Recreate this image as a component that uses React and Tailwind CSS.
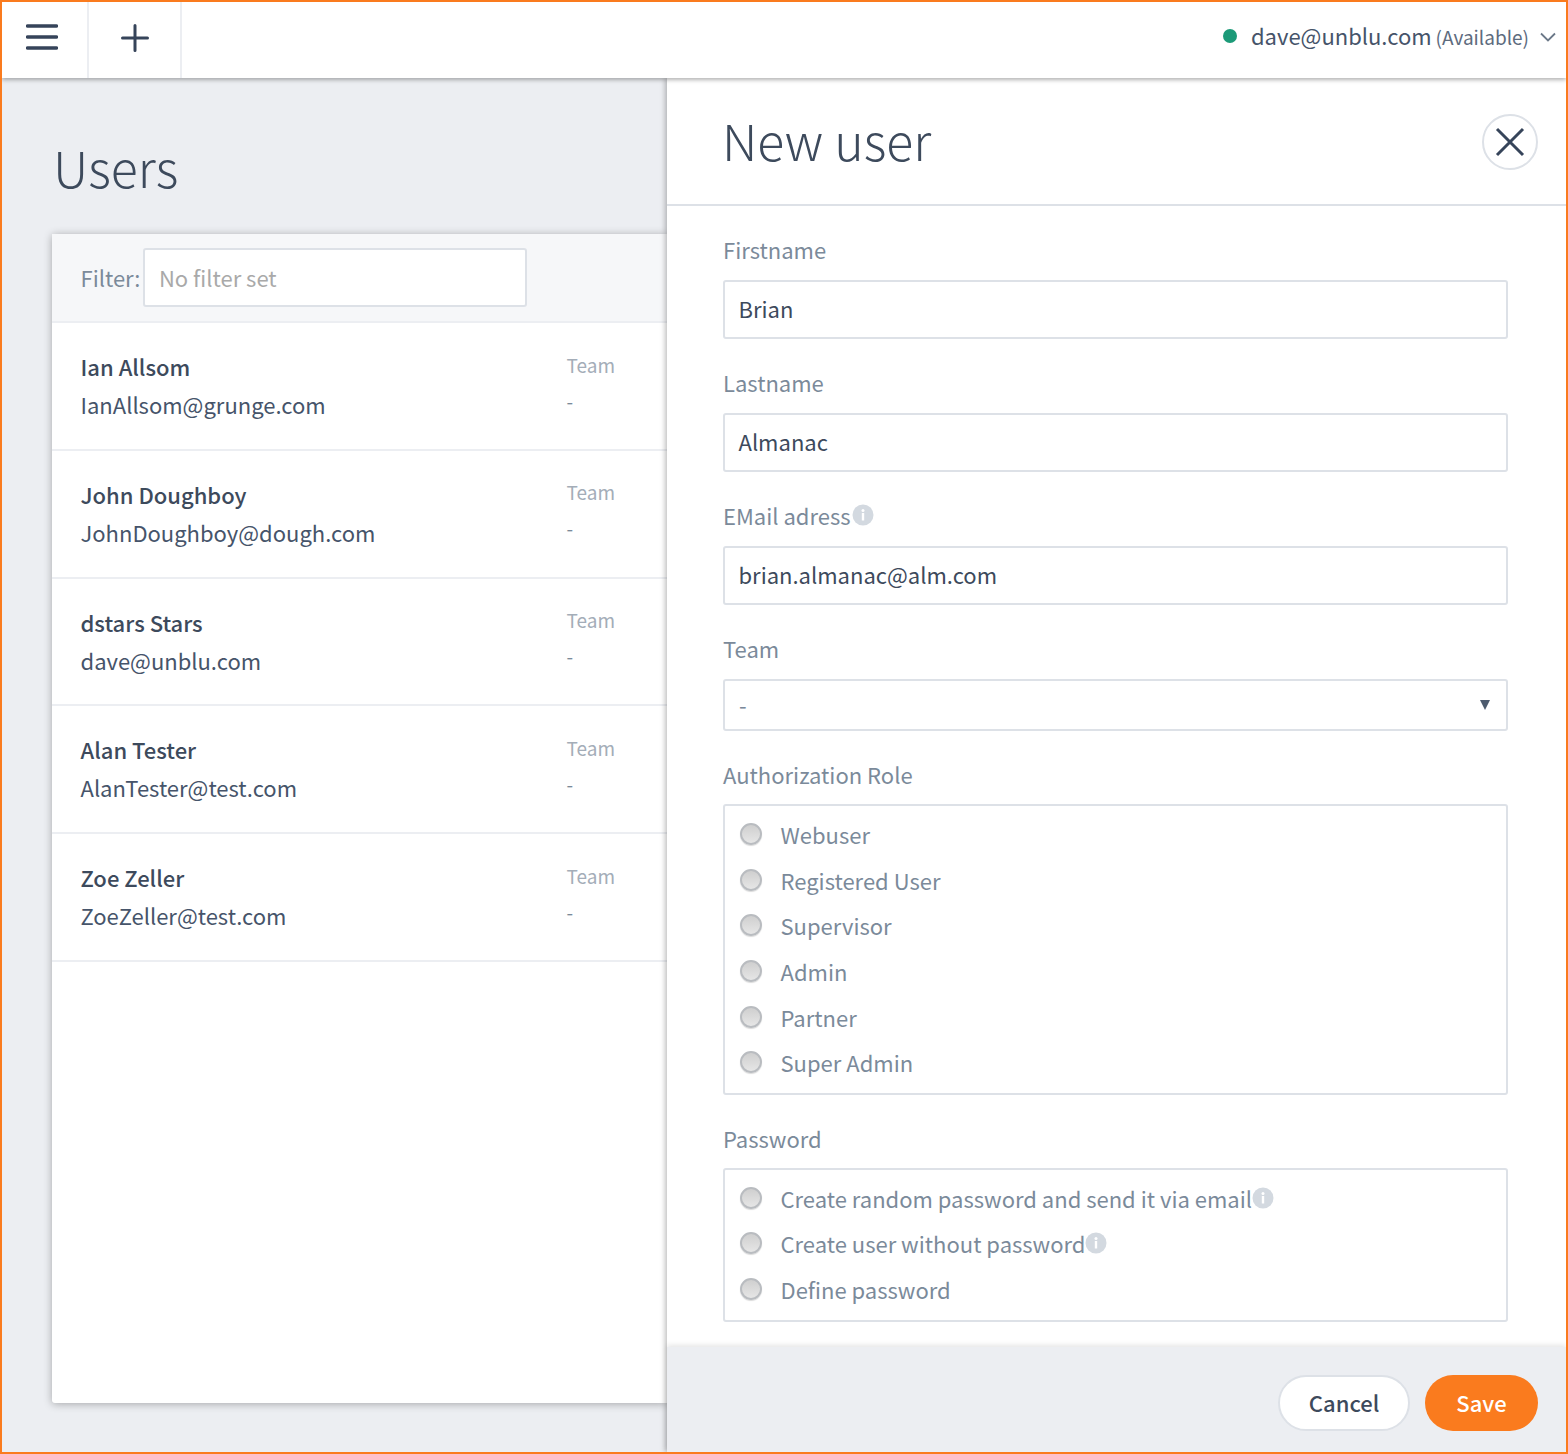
import React from "react";

const users = [
  ["Ian Allsom", "IanAllsom@grunge.com"],
  ["John Doughboy", "JohnDoughboy@dough.com"],
  ["dstars Stars", "dave@unblu.com"],
  ["Alan Tester", "AlanTester@test.com"],
  ["Zoe Zeller", "ZoeZeller@test.com"],
];
const font = { fontFamily: '"Noto Sans CJK SC", "Noto Sans", sans-serif' };

function Info({ className = "" }) {
  return (
    <svg width="22" height="22" viewBox="0 0 22 22" className={"shrink-0 " + className}>
      <circle cx="11" cy="11" r="10.5" fill="#D3D9E0" />
      <circle cx="11" cy="6.5" r="1.5" fill="#fff" />
      <rect x="9.8" y="9" width="2.4" height="7.5" fill="#fff" />
    </svg>
  );
}

function Label({ children, info }) {
  return (
    <div className="flex h-[30px] items-center pb-[4px] text-[22px] leading-[26px] text-[#7B8A9A]">
      {children}
      {info && <Info className="ml-[1px]" />}
    </div>
  );
}

function Field({ label, value, info }) {
  return (
    <div className="mb-[30px]">
      <Label info={info}>{label}</Label>
      <div className="mt-[14px] flex h-[59px] items-center rounded-[3px] border-2 border-[#DDE1E7] bg-white px-[13.5px] pb-[2px] text-[22px] text-[#3D4A5C]">
        {value}
      </div>
    </div>
  );
}

function Radio({ label, info }) {
  return (
    <div className="flex h-[45.6px] items-center text-[22px] text-[#7B8A9A]">
      <span className="-mt-[3px] h-[22px] w-[22px] shrink-0 rounded-full border-2 border-[#B9BCC0] bg-gradient-to-b from-[#CFCFCF] to-[#E6E6E6] shadow-[0_1px_1px_rgba(0,0,0,0.15)]" />
      <span className="ml-[18.5px] pb-[2px]">{label}</span>
      {info && <Info className="-mt-[3px]" />}
    </div>
  );
}

function Group({ label, items, className = "", pb }) {
  return (
    <div className={className}>
      <Label>{label}</Label>
      <div className={"mt-[13px] rounded-[3px] border-2 border-[#DDE1E7] bg-white px-[15px] pt-[7px] " + pb}>
        {items.map(([t, i]) => (
          <Radio key={t} label={t} info={i} />
        ))}
      </div>
    </div>
  );
}

export default function App() {
  return (
    <div style={font} className="flex h-[1454px] w-[1568px] flex-col overflow-hidden border-2 border-[#FA7B1E] bg-[#ECEEF2]">
      <header className="relative z-20 flex h-[76px] shrink-0 items-center bg-white shadow-[0_2px_4px_rgba(0,0,0,0.3)]">
        <div className="flex h-full w-[87px] items-center justify-center border-r-2 border-[#ECEEF2] pb-[6px]">
          <svg width="32" height="28" viewBox="0 0 32 28" className="mr-[5px]">
            <path d="M1.5 3h29M1.5 14h29M1.5 25h29" stroke="#36445A" strokeWidth="3.4" strokeLinecap="round" />
          </svg>
        </div>
        <div className="flex h-full w-[93px] items-center justify-center border-r-2 border-[#ECEEF2] pb-[4px]">
          <svg width="28" height="28" viewBox="0 0 28 28">
            <path d="M14 1.5v25M1.5 14h25" stroke="#36445A" strokeWidth="3" strokeLinecap="round" />
          </svg>
        </div>
        <div className="ml-auto flex items-center pb-[6px] pr-[10px]">
          <span className="mb-[2px] h-[14px] w-[14px] rounded-full bg-[#1C9A78]" />
          <span className="ml-[14px] pb-[4px] text-[22px] text-[#46546A]">dave@unblu.com</span>
          <span className="ml-[4px] text-[19px] text-[#5D6B7E]">(Available)</span>
          <svg width="16" height="10" viewBox="0 0 16 10" className="ml-[11px]">
            <path d="M1 1.5l7 7 7-7" fill="none" stroke="#6B7888" strokeWidth="1.8" />
          </svg>
        </div>
      </header>

      <div className="flex min-h-0 flex-1">
        <main className="flex w-[665px] shrink-0 flex-col pb-[49px] pl-[50px]">
          <h1 className="flex h-[156px] shrink-0 items-center pl-[1px] pt-[21px] text-[50px] font-light text-[#3D4A5C]">Users</h1>
          <div className="flex min-h-0 flex-1 flex-col rounded-l-[3px] bg-white shadow-[0_1px_8px_rgba(0,0,0,0.3)]">
            <div className="flex h-[89px] shrink-0 items-center border-b-2 border-[#ECEEF2] bg-[#F6F7F9] pl-[28.5px]">
              <span className="text-[22px] text-[#7B8A9A]">Filter:</span>
              <div className="ml-[2.5px] flex h-[59px] w-[384px] items-center rounded-[3px] border-2 border-[#DDE1E7] bg-white px-[14px] text-[22px] text-[#A9A9A9]">
                No filter set
              </div>
            </div>
            {users.map(([name, mail]) => (
              <div key={mail} className="flex h-[127.75px] shrink-0 justify-between border-b-2 border-[#ECEEF2] pl-[28.5px] pr-[52.5px] pt-[24px]">
                <div>
                  <div className="text-[22px] font-medium leading-[38px] text-[#3D4A5C]">{name}</div>
                  <div className="text-[22px] leading-[38px] text-[#46546A]">{mail}</div>
                </div>
                <div className="w-[48px] text-[19px]">
                  <div className="mt-[1.5px] leading-[32px] text-[#A4ADB8]">Team</div>
                  <div className="mt-[4px] leading-[32px] text-[#7B8A9A]">-</div>
                </div>
              </div>
            ))}
          </div>
        </main>

        <aside className="relative z-10 flex min-w-0 flex-1 flex-col bg-white shadow-[-2px_0_5px_rgba(0,0,0,0.25)]">
          <div className="flex h-[128px] shrink-0 items-center justify-between border-b-2 border-[#DDE1E7] pl-[55px] pr-[28px]">
            <h2 className="pb-[4px] text-[50px] font-light text-[#3D4A5C]">New user</h2>
            <button className="mt-[2px] flex h-[56px] w-[56px] items-center justify-center rounded-full border-2 border-[#DDE1E7] bg-white">
              <svg width="30" height="30" viewBox="0 0 30 30">
                <path d="M2 2l26 26M28 2L2 28" stroke="#36445A" strokeWidth="3" />
              </svg>
            </button>
          </div>
          <div className="min-h-0 flex-1 overflow-hidden pl-[56px] pr-[58px] pt-[30px]">
            <Field label="Firstname" value="Brian" />
            <Field label="Lastname" value="Almanac" />
            <Field label="EMail adress" value="brian.almanac@alm.com" info />
            <div className="mb-[30px]">
              <Label>Team</Label>
              <div className="mt-[14px] flex h-[52px] items-center justify-between rounded-[3px] border-2 border-[#DDE1E7] bg-white pb-[1px] pl-[14px] pr-[16px] text-[22px] text-[#7B8A9A]">
                <span>-</span>
                <span className="h-0 w-0 border-x-[5px] border-t-[10px] border-x-transparent border-t-[#4D5B6E]" />
              </div>
            </div>
            <Group
              className="mb-[30px]"
              pb="pb-[6px]"
              label="Authorization Role"
              items={[["Webuser"], ["Registered User"], ["Supervisor"], ["Admin"], ["Partner"], ["Super Admin"]]}
            />
            <Group
              pb="pb-[7px]"
              label="Password"
              items={[["Create random password and send it via email", true], ["Create user without password", true], ["Define password"]]}
            />
          </div>
          <div className="flex h-[105px] shrink-0 items-center justify-end gap-[15px] bg-[#ECEEF2] pr-[28px] pt-[7px] shadow-[0_-2px_5px_rgba(0,0,0,0.1)]">
            <button className="flex h-[56px] w-[132px] items-center justify-center rounded-full border-2 border-[#DDE1E7] bg-white pb-[1px] text-[22px] font-medium text-[#3D4A5C]">Cancel</button>
            <button className="flex h-[56px] w-[113px] items-center justify-center rounded-full bg-[#FA7B1E] pb-[1px] text-[22px] font-medium text-white">Save</button>
          </div>
        </aside>
      </div>
    </div>
  );
}
